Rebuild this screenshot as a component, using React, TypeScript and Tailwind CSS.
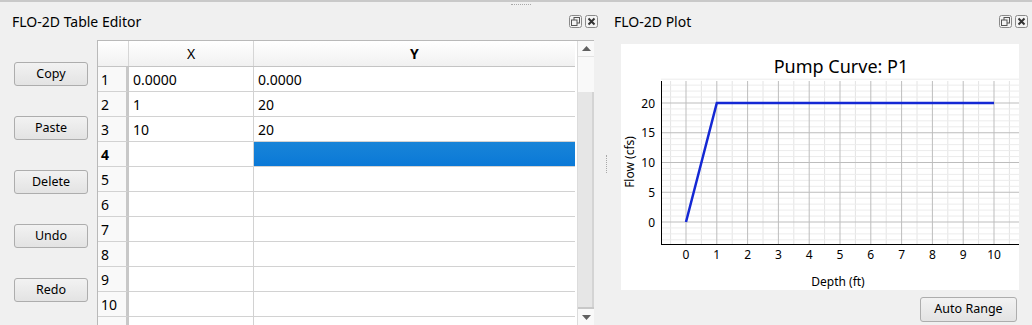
import React from "react";

const rows: { n: number; x: string; y: string }[] = [
  { n: 1, x: "0.0000", y: "0.0000" },
  { n: 2, x: "1", y: "20" },
  { n: 3, x: "10", y: "20" },
  { n: 4, x: "", y: "" },
  { n: 5, x: "", y: "" },
  { n: 6, x: "", y: "" },
  { n: 7, x: "", y: "" },
  { n: 8, x: "", y: "" },
  { n: 9, x: "", y: "" },
  { n: 10, x: "", y: "" },
  { n: 11, x: "", y: "" },
];

const buttons = ["Copy", "Paste", "Delete", "Undo", "Redo"];

function DockIcons() {
  return (
    <div className="flex items-center gap-[3px]">
      <svg width="13" height="13" viewBox="0 0 13 13">
        <rect x="0.5" y="0.5" width="12" height="12" rx="2" fill="#f4f4f4" stroke="#8a8a8a" />
        <rect x="5" y="2.5" width="5.5" height="5.5" fill="none" stroke="#555" />
        <rect x="2.5" y="5" width="5.5" height="5.5" fill="#f4f4f4" stroke="#555" />
      </svg>
      <svg width="13" height="13" viewBox="0 0 13 13">
        <rect x="0.5" y="0.5" width="12" height="12" rx="2" fill="#f4f4f4" stroke="#8a8a8a" />
        <path d="M3.5 3.5 L9.5 9.5 M9.5 3.5 L3.5 9.5" stroke="#333" strokeWidth="2" />
      </svg>
    </div>
  );
}

function PushButton({ label, className }: { label: string; className: string }) {
  return (
    <button
      type="button"
      className={`flex items-center justify-center rounded-[3px] border border-[#adadad] bg-gradient-to-b from-[#f2f2f2] to-[#e3e3e3] text-[12.5px] text-black ${className}`}
    >
      {label}
    </button>
  );
}

function TableEditor() {
  return (
    <div className="flex h-[285px] w-[497px] border-t border-l border-[#b9b9b9] bg-white">
      {/* grid */}
      <div className="flex w-[478px] flex-col overflow-hidden">
        <div className="flex h-[26px] shrink-0 border-b border-[#c4c4c4] bg-gradient-to-b from-[#ffffff] to-[#f1f1f1] text-[14px]">
          <div className="w-[31px] border-r border-[#d6d6d6]" />
          <div className="flex w-[125px] items-center justify-center border-r border-[#d6d6d6]">X</div>
          <div className="flex w-[321px] items-center justify-center font-bold">Y</div>
        </div>
        {rows.map((r) => (
          <div key={r.n} className="flex h-[25px] shrink-0 text-[14px]">
            <div
              className={`flex w-[31px] items-center border-b border-r-[3px] border-b-[#d2d2d2] border-r-[#c8c8c8] bg-[#f9f9f9] pl-[3px] ${
                r.n === 4 ? "font-bold" : ""
              }`}
            >
              {r.n}
            </div>
            <div className="flex w-[125px] items-center border-r border-b border-[#d2d2d2] pl-[4px]">{r.x}</div>
            <div
              className={`flex w-[321px] items-center border-b pl-[4px] ${
                r.n === 4
                  ? "border-[#d2d2d2] bg-gradient-to-b from-[#1884d8] to-[#0a79d7]"
                  : "border-[#d2d2d2]"
              }`}
            >
              {r.y}
            </div>
          </div>
        ))}
      </div>
      {/* scrollbar */}
      <div className="ml-[2px] flex w-[17px] flex-col border-l border-[#dcdcdc] bg-[#f9f9f9]">
        <div className="flex h-[16px] shrink-0 items-center justify-center border-b border-[#e3e3e3]">
          <svg width="9" height="5" viewBox="0 0 9 5">
            <path d="M0 5 L4.5 0 L9 5 Z" fill="#606060" />
          </svg>
        </div>
        <div className="h-[35px] shrink-0" />
        <div className="flex-1 border-r-2 border-[#d4d4d4] bg-[#e6e6e6]" />
        <div className="h-[2px] shrink-0 bg-[#c8c8c8]" />
        <div className="flex h-[16px] shrink-0 items-center justify-center">
          <svg width="9" height="5" viewBox="0 0 9 5">
            <path d="M0 0 L9 0 L4.5 5 Z" fill="#606060" />
          </svg>
        </div>
      </div>
    </div>
  );
}

function Plot() {
  const px = (v: number) => 65 + v * 30.8;
  const py = (v: number) => 178 - v * 5.95;
  const majorX = Array.from({ length: 12 }, (_, i) => i);
  const minorX = Array.from({ length: 23 }, (_, i) => -0.5 + i * 0.5).filter((v) => !Number.isInteger(v));
  const majorY = [0, 5, 10, 15, 20];
  const minorY = Array.from({ length: 28 }, (_, i) => -3 + i).filter((v) => v % 5 !== 0);
  return (
    <svg width="398" height="246" viewBox="0 0 398 246" className="block">
      <rect width="398" height="246" fill="#ffffff" />
      <text x="220" y="29" textAnchor="middle" fontSize="18" fontFamily="'Noto Sans', sans-serif" fill="#000">
        Pump Curve: P1
      </text>
      {/* minor grid */}
      {minorX.map((v) => (
        <line key={`mx${v}`} x1={px(v)} x2={px(v)} y1={37} y2={200} stroke="#e4e4e4" strokeWidth="1" />
      ))}
      {minorY.map((v) => (
        <line key={`my${v}`} x1={40} x2={398} y1={py(v)} y2={py(v)} stroke="#ececec" strokeWidth="1" />
      ))}
      {/* major grid */}
      {majorX.map((v) => (
        <line key={`Mx${v}`} x1={px(v)} x2={px(v)} y1={37} y2={200} stroke="#bdbdbd" strokeWidth="1" />
      ))}
      {majorY.map((v) => (
        <line key={`My${v}`} x1={40} x2={398} y1={py(v)} y2={py(v)} stroke="#bdbdbd" strokeWidth="1" />
      ))}
      {/* axes */}
      <line x1={40.5} x2={40.5} y1={37} y2={200} stroke="#000" strokeWidth="1" />
      <line x1={40} x2={398} y1={200.5} y2={200.5} stroke="#000" strokeWidth="1" />
      {/* tick labels */}
      {majorY.map((v) => (
        <text key={`ly${v}`} x={34} y={py(v) + 4.5} textAnchor="end" fontSize="12" fontFamily="'Noto Sans', sans-serif" fill="#000">
          {v}
        </text>
      ))}
      {majorX.slice(0, 11).map((v) => (
        <text key={`lx${v}`} x={px(v)} y={215} textAnchor="middle" fontSize="12" fontFamily="'Noto Sans', sans-serif" fill="#000">
          {v}
        </text>
      ))}
      <text x="217" y="242" textAnchor="middle" fontSize="12" fontFamily="'Noto Sans', sans-serif" fill="#000">
        Depth (ft)
      </text>
      <text
        x="0"
        y="0"
        transform="translate(13 118) rotate(-90)"
        textAnchor="middle"
        fontSize="12"
        fontFamily="'Noto Sans', sans-serif"
        fill="#000"
      >
        Flow (cfs)
      </text>
      {/* curve */}
      <polyline
        points={`${px(0)},${py(0)} ${px(1)},${py(20)} ${px(10)},${py(20)}`}
        fill="none"
        stroke="#1428d4"
        strokeWidth="2.5"
      />
    </svg>
  );
}

export default function App() {
  return (
    <div className="relative flex h-[325px] w-[1032px] overflow-hidden border-t-2 border-[#c9c9c9] bg-[#f0f0f0] font-['Noto_Sans',sans-serif] text-black">
      {/* top splitter grip */}
      <div className="absolute left-[511px] top-[2px] h-[1px] w-[20px] border-t border-dotted border-[#a8a8a8]" />

      {/* Table editor dock */}
      <section className="flex w-[598px] flex-col">
        <div className="flex h-[38px] items-center justify-between pl-[12px] pr-[0px]">
          <h2 className="text-[14px]">FLO-2D Table Editor</h2>
          <DockIcons />
        </div>
        <div className="flex flex-1">
          <div className="flex w-[97px] flex-col gap-[30px] pl-[14px] pt-[22px]">
            {buttons.map((b) => (
              <PushButton key={b} label={b} className="h-[24px] w-[74px]" />
            ))}
          </div>
          <TableEditor />
        </div>
      </section>

      {/* dock splitter */}
      <div className="flex w-[16px] items-center justify-center">
        <div className="h-[18px] w-[1px] border-l border-dotted border-[#a8a8a8]" />
      </div>

      {/* Plot dock */}
      <section className="flex flex-1 flex-col">
        <div className="flex h-[38px] items-center justify-between pl-[0px] pr-[4px]">
          <h2 className="text-[14px]">FLO-2D Plot</h2>
          <DockIcons />
        </div>
        <div className="pl-[7px] pt-[4px]">
          <Plot />
        </div>
        <div className="flex justify-end pr-[15px] pt-[7px]">
          <PushButton label="Auto Range" className="h-[25px] w-[97px]" />
        </div>
      </section>
    </div>
  );
}
